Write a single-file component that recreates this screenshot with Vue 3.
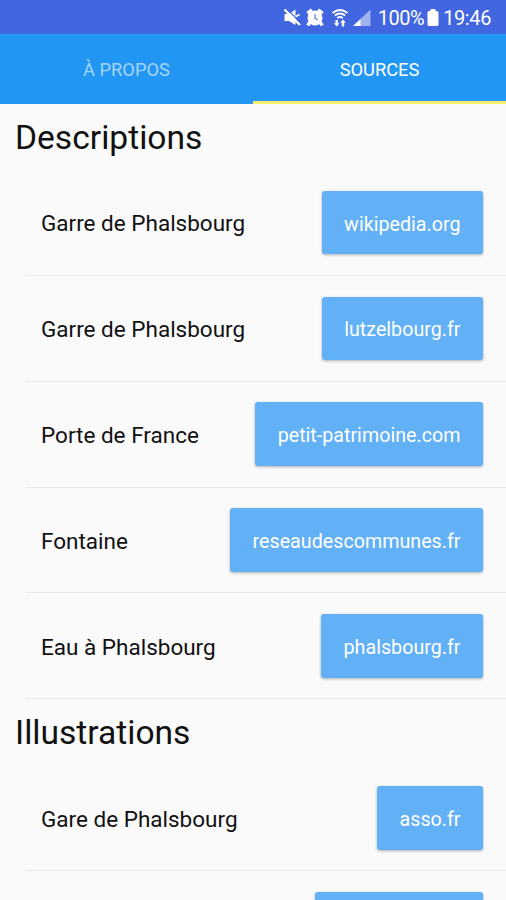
<script setup>
import { ref } from 'vue'

const active = ref(1)
const tabs = ['À PROPOS', 'SOURCES']
const sections = [
  {
    title: 'Descriptions',
    items: [
      { label: 'Garre de Phalsbourg', site: 'wikipedia.org' },
      { label: 'Garre de Phalsbourg', site: 'lutzelbourg.fr' },
      { label: 'Porte de France', site: 'petit-patrimoine.com' },
      { label: 'Fontaine', site: 'reseaudescommunes.fr' },
      { label: 'Eau à Phalsbourg', site: 'phalsbourg.fr' },
    ],
  },
  {
    title: 'Illustrations',
    items: [
      { label: 'Gare de Phalsbourg', site: 'asso.fr' },
      { label: '', site: '' },
    ],
  },
]
</script>

<template>
  <div class="screen">
    <header class="status">
      <svg class="icons" width="90" height="20" viewBox="0 0 90 20" fill="#fff">
        <path d="M1.500 6h4.500L12.500 1.500v15.500L6 13H1.500z" />
        <path d="M12 9l4.500-2.500" stroke="#fff" stroke-width="1.800" />
        <path d="M4 1l14 14" stroke="#4166df" stroke-width="1.300" />
        <path d="M1.500 1.500L17 17" stroke="#fff" stroke-width="2.300" />
        <circle cx="32" cy="10" r="7.500" />
        <path d="M24.500 5.500l4.500-3.500M35 2l4.500 3.500M26.500 14.500l-1.500 3M37.500 14.500l1.500 3" stroke="#fff" stroke-width="3.600" />
        <path d="M32 6v4.300l2.800 1.500" stroke="#5b7ce5" stroke-width="1.200" fill="none" />
        <g fill="none" stroke="#fff" stroke-width="1.900">
          <path d="M49.500 5q7.500-6 15 0" />
          <path d="M51.800 7.500q5.200-4 10.400 0" />
          <path d="M54.200 10q2.800-2 5.600 0" />
        </g>
        <path d="M53.700 18.500l-2.800-3.200h1.600V12h2.400v3.300h1.600zM60 11.500l2.800 3.200h-1.600v3.800h-2.400v-3.800h-1.600z" />
        <path d="M87.500 1.500V18H70z" opacity=".5" />
        <path d="M77.500 11v7H70z" />
      </svg>
      <span class="percent">100%</span>
      <svg class="battery" width="12" height="18" viewBox="0 0 12 18" fill="#fff">
        <path d="M3.500 0h5v2H10q1.500 0 1.500 1.500v12q0 1.500-1.500 1.500H2q-1.500 0-1.500-1.500v-12Q.5 2 2 2h1.500z" />
      </svg>
      <span class="time">19:46</span>
    </header>
    <nav class="tabs">
      <button
        v-for="(tab, i) in tabs"
        :key="tab"
        class="tab"
        :class="{ active: active === i }"
        @click="active = i"
      >{{ tab }}</button>
    </nav>
    <main>
      <section v-for="section in sections" :key="section.title">
        <h2>{{ section.title }}</h2>
        <div v-for="(item, i) in section.items" :key="i" class="row">
          <span class="label">{{ item.label }}</span>
          <button class="link" :class="{ blank: !item.site }">{{ item.site }}</button>
        </div>
      </section>
    </main>
  </div>
</template>

<style>
body {
  margin: 0;
  overflow: hidden;
}
</style>

<style scoped>
.screen {
  width: 506px;
  height: 900px;
  overflow: hidden;
  background: #fafafa;
  color: #111;
  font-family: Roboto, sans-serif;
}
.status {
  display: flex;
  align-items: center;
  height: 34px;
  box-sizing: border-box;
  padding: 2px 15px 0 0;
  justify-content: flex-end;
  background: #4166df;
  color: #fff;
  font-size: 20px;
}
.icons {
  margin-right: 5px;
}
.percent {
  letter-spacing: -0.5px;
}
.battery {
  margin: 0 4px 0 3px;
}
.time {
  letter-spacing: -0.4px;
}
.tabs {
  display: flex;
  height: 69.800px;
  background: #2196f3;
}
.tab {
  flex: 1;
  border: 0;
  border-bottom: 3px solid transparent;
  padding: 5px 0 0;
  background: none;
  color: #a6d5fa;
  font: 400 18.300px Roboto, sans-serif;
}
.tab.active {
  color: #fff;
  border-bottom-color: #faec6e;
}
h2 {
  margin: 0;
  height: 66.300px;
  padding-left: 15px;
  font-size: 33.600px;
  line-height: 68px;
  font-weight: 400;
}
.row {
  display: flex;
  align-items: center;
  justify-content: space-between;
  box-sizing: border-box;
  height: 105.850px;
  margin-left: 25px;
  padding: 0 23px 0 16px;
  border-bottom: 1px solid #ebebeb;
}
.label {
  font-size: 22.500px;
  padding-top: 1.500px;
}
.link {
  height: 63.500px;
  border: 0;
  border-radius: 3px;
  padding: 3px 22.500px 0;
  background: #62b0f6;
  color: #fff;
  font: 400 19.700px Roboto, sans-serif;
  box-shadow: 0 1px 3px rgba(0, 0, 0, 0.3);
}
.link.blank {
  width: 168px;
}
</style>
